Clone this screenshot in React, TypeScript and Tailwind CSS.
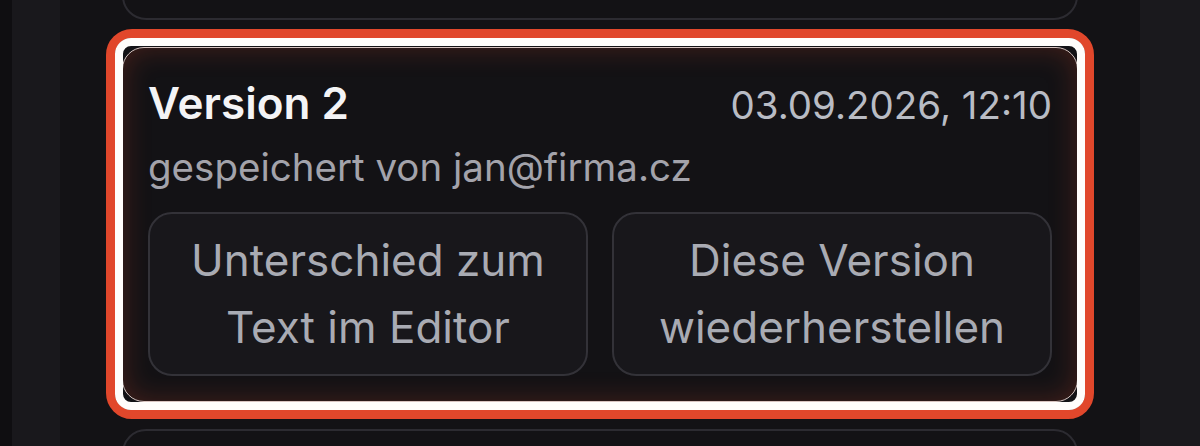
const versions = [
  { id: 3, hidden: true },
  { id: 2, hidden: false },
  { id: 1, hidden: true },
];

function VersionCard() {
  return (
    <div className="relative">
      <article className="rounded-[22px] border border-[#d8c4c0] bg-[#131215] px-[25px] pt-[29px] pb-[25px] shadow-[inset_0_0_28px_rgba(200,70,40,0.28)]">
        <div className="flex items-baseline justify-between">
          <h3 className="text-[44px] leading-[52px] font-semibold text-[#f4f4f6]">Version 2</h3>
          <span className="text-[38.5px] leading-[52px] text-[#b9bcc4]">03.09.2026, 12:10</span>
        </div>
        <p className="mt-[12px] text-[38.5px] leading-[48px] text-[#a3a3ab]">gespeichert von jan@firma.cz</p>
        <div className="mt-[21px] grid grid-cols-2 gap-[24px]">
          <button className="h-[164px] rounded-[24px] border-2 border-[#333238] bg-[#18171b] px-4 text-[44px] leading-[67px] text-[#a9abb3]">
            Unterschied zum
            <br />
            Text im Editor
          </button>
          <button className="h-[164px] rounded-[24px] border-2 border-[#333238] bg-[#18171b] px-4 text-[44px] leading-[67px] text-[#a9abb3]">
            Diese Version
            <br />
            wiederherstellen
          </button>
        </div>
      </article>
      {/* highlight ring around the selected entry */}
      <div className="pointer-events-none absolute -inset-x-[16px] -top-[18px] -bottom-[17px] rounded-[26px] border-[9px] border-[#e1472b]">
        <div className="h-full w-full rounded-[16px] border-[8px] border-[#fffdfb]" />
      </div>
    </div>
  );
}

export default function App() {
  return (
    <div className="flex h-[446px] w-[1200px] overflow-hidden bg-[#131215] font-['Inter',sans-serif]">
      <div className="w-[12px] bg-[#0f0e11]" />
      <div className="w-[48px] bg-[#19181c]" />
      <main className="flex-1 px-[62px]">
        <div className="-mt-[80px] flex flex-col gap-[27px]">
          {versions.map((v) =>
            v.hidden ? (
              <div key={v.id} className="h-[100px] rounded-[24px] border-2 border-[#2c2b31] bg-[#131215]" />
            ) : (
              <VersionCard key={v.id} />
            )
          )}
        </div>
      </main>
      <div className="w-[60px] bg-[#1a191d]" />
    </div>
  );
}
